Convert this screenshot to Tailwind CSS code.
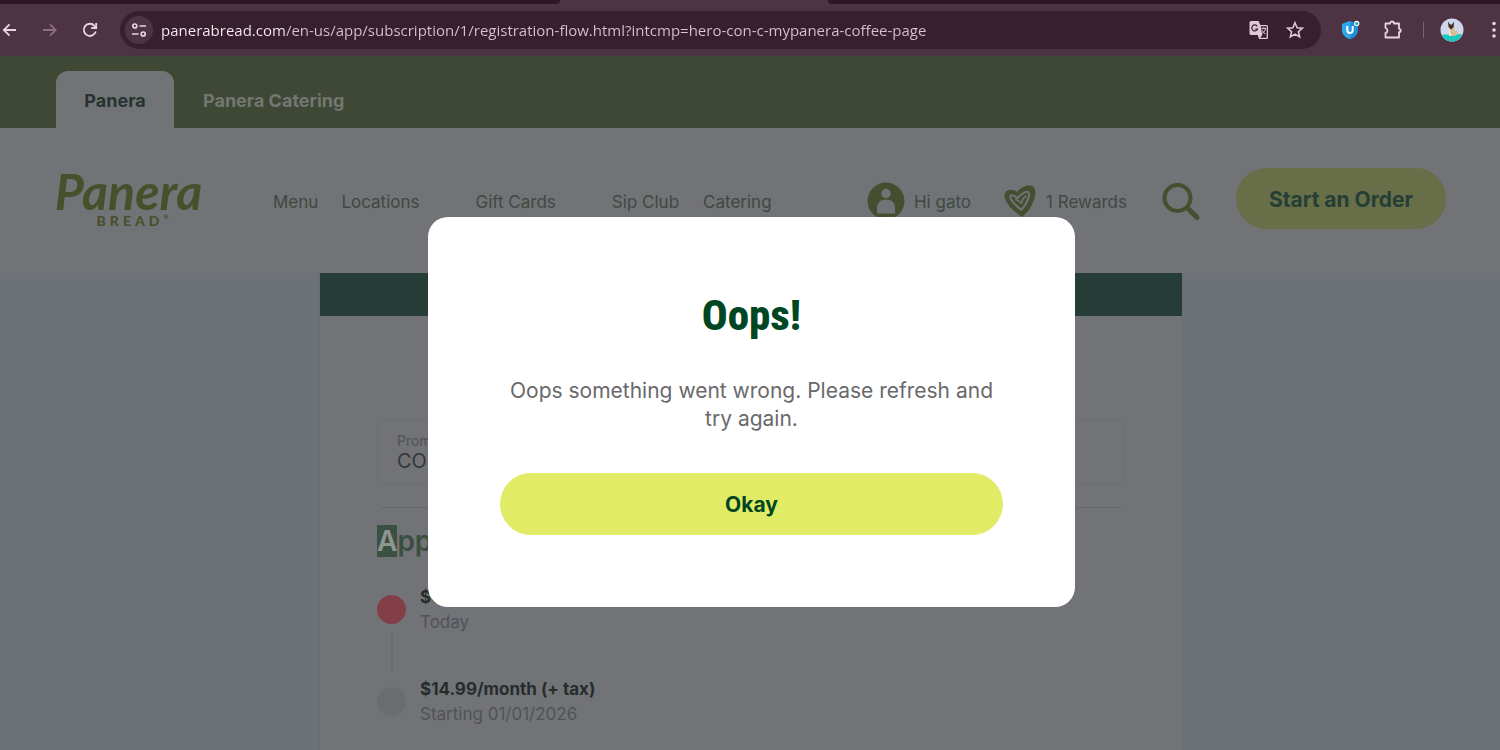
<!DOCTYPE html>
<html lang="en">
<head>
  <meta charset="UTF-8" />
  <meta name="viewport" content="width=device-width, initial-scale=1.0" />
  <title>Panera Bread</title>
  <script src="https://cdn.jsdelivr.net/npm/@tailwindcss/browser@4"></script>
</head>
<body class="h-screen flex flex-col overflow-hidden bg-[#6d7276] font-['Inter',sans-serif]">

  <!-- Browser bar -->
  <div class="flex h-1 shrink-0 bg-[#4e3443]">
    <div class="w-[560px] rounded-br bg-[#2e1726]"></div>
    <div class="w-[268px]"></div>
    <div class="flex-1 rounded-bl bg-[#2e1726]"></div>
  </div>
  <div class="flex h-[52px] shrink-0 items-center bg-[#4e3443] text-[#ecd3e2]">
    <button aria-label="Back" class="w-5 shrink-0">
      <svg class="w-5 h-5" viewBox="0 0 20 20" fill="none" stroke="currentColor" stroke-width="1.8"><path d="M16 10H4M9.500 4.300L3.800 10l5.700 5.700" /></svg>
    </button>
    <button aria-label="Forward" class="ml-5 w-5 shrink-0 text-[#8b6f80]">
      <svg class="w-5 h-5" viewBox="0 0 20 20" fill="none" stroke="currentColor" stroke-width="1.8"><path d="M3 10h12M10 4.300l5.700 5.700-5.700 5.700" /></svg>
    </button>
    <button aria-label="Reload" class="ml-5 w-5 shrink-0">
      <svg class="w-5 h-5" viewBox="0 0 20 20" fill="none" stroke="currentColor" stroke-width="1.8"><path d="M15.800 11.500A6.100 6.100 0 1 1 14.500 5.800L16 7.400" /><path d="M16.200 3v5h-5" /></svg>
    </button>
    <div class="ml-5 flex h-[38px] flex-1 items-center rounded-full bg-[#371f2e] pl-[5px] pr-4">
      <button aria-label="Site information" class="flex h-7 w-7 shrink-0 items-center justify-center rounded-full bg-[#4e3443]">
        <svg class="w-4 h-4" viewBox="0 0 16 16" fill="none" stroke="currentColor" stroke-width="1.7"><circle cx="3.8" cy="4" r="2" /><path d="M8.500 4H15M1 12h6.500" /><circle cx="12.2" cy="12" r="2" /></svg>
      </button>
      <input aria-label="Address" type="text" value="panerabread.com/en-us/app/subscription/1/registration-flow.html?intcmp=hero-con-c-mypanera-coffee-page" class="ml-2 min-w-0 flex-1 bg-[linear-gradient(to_right,#fdeef8_124px,#d8c3d0_124px)] bg-clip-text text-[15px] text-transparent outline-none font-['Open_Sans',sans-serif]" />
      <button aria-label="Translate" class="w-5">
        <svg class="w-5 h-5" viewBox="0 0 20 20"><path d="M2 1h7.500l1.800 4H17.500a1.500 1.500 0 0 1 1.500 1.500V17.500a1.500 1.500 0 0 1-1.500 1.500H10L8.800 15H2A1.500 1.500 0 0 1 .5 13.500v-11A1.500 1.500 0 0 1 2 1z" fill="#e0c8d6" /><path d="M11.700 6.200h6v11.500h-6.500l2-2.700z" fill="#371f2e" /><path d="M8.300 6.300A3 3 0 1 0 8.600 9H6" fill="none" stroke="#371f2e" stroke-width="1.2" /><path d="M12.300 8.500h5M14.800 7.300v1.200M16.500 8.700c-.6 2.400-2 4-3.500 5M13 10.200c.8 1.600 2.200 3 3.600 3.900" fill="none" stroke="#e0c8d6" /></svg>
      </button>
      <button aria-label="Bookmark this page" class="ml-4 w-5">
        <svg class="w-5 h-5" viewBox="0 0 20 20" fill="none" stroke="#e0c8d6" stroke-width="1.6"><path d="M10 2.800l2.100 4.900 5.300.5-4 3.500 1.200 5.200L10 14.100l-4.600 2.800 1.200-5.200-4-3.500 5.300-.5z" /></svg>
      </button>
    </div>
    <button aria-label="Shield extension" class="ml-5 w-5">
      <svg class="w-5 h-5" viewBox="0 0 20 20"><path d="M9 1l8 3v6c0 4.500-3.500 7.700-8 9.300C4.500 17.700 1 14.500 1 10V4z" fill="#1d8fdc" /><path d="M9 1L1 4v6c0 4.500 3.500 7.700 8 9.300z" fill="#2da6ea" /><path d="M6.300 6v4.200a2.700 2.700 0 0 0 5.400 0V6" fill="none" stroke="#fff" stroke-width="2" /><circle cx="15.7" cy="3.5" r="2.7" fill="#fff" /><circle cx="15.7" cy="3.5" r="1.6" fill="#19b5a5" /></svg>
    </button>
    <button aria-label="Extensions" class="ml-[22px] w-5">
      <svg class="w-5 h-5" viewBox="0 0 20 20" fill="none" stroke="currentColor" stroke-width="1.8" stroke-linejoin="round"><path d="M2.500 3.500H7a2 2 0 0 1 4 0h5v5.300a1.700 1.700 0 0 1 0 3.400v5.300H2.500v-4.300a2.700 2.700 0 0 0 0-5.200z" /></svg>
    </button>
    <div class="ml-5 h-4 w-px bg-[#7a6070]"></div>
    <button aria-label="Profile" class="ml-4 w-6">
      <svg class="w-6 h-6" viewBox="0 0 24 24"><circle cx="12" cy="12" r="11.5" fill="#d0d6ec" /><path d="M1.800 17.500C5 15.500 8 17 12 17s7-2 10.200 0A11.500 11.500 0 0 1 1.800 17.500z" fill="#18c8bc" /><path d="M10 8l4 .5 1 5c2-1.500 2.800-1 2.700 1.500-.3 2-2 3-4.200 3H9.500z" fill="#d6bd91" /><path d="M8 3.500l2 3h2l2-3-.3 5.500-2.700 2.500L8.500 9z" fill="#3c3028" /><path d="M9.800 10.500l1.500 7.500H9z" fill="#f5edda" /></svg>
    </button>
    <button aria-label="Menu" class="ml-4 w-5">
      <svg class="w-5 h-5" viewBox="0 0 20 20" fill="currentColor"><circle cx="14" cy="3.5" r="1.8" /><circle cx="14" cy="10" r="1.8" /><circle cx="14" cy="16" r="1.8" /></svg>
    </button>
  </div>

  <div class="relative flex flex-1 flex-col overflow-hidden">
    <!-- Brand tabs -->
    <div class="flex h-[72px] shrink-0 items-end bg-[#3f4834] px-14 text-lg font-bold">
      <a href="#" class="flex h-[57px] w-[118px] items-center justify-center rounded-t-xl bg-[#727377] pt-0.5 text-[#26332f]">Panera</a>
      <a href="#" class="ml-[29px] flex h-[57px] items-center pt-0.5 text-[#727773]">Panera Catering</a>
    </div>

    <!-- Site header -->
    <header class="flex h-[145px] shrink-0 items-center bg-[#727377] pl-14 pr-[54px] text-[17px] text-[#3f4941]">
      <a href="#" class="flex w-[145px] flex-col items-center text-[#46502b] font-['Lato',sans-serif]">
        <span class="text-[50px] leading-10 font-bold italic">Panera</span>
        <span class="flex pl-2 text-sm leading-5 font-black tracking-[4px]">BREAD<span class="text-[6px] leading-3 tracking-normal">®</span></span>
      </a>
      <nav class="ml-[72px] flex items-center pt-1">
        <a href="#" class="mr-[23px]">Menu</a>
        <a href="#" class="mr-14">Locations</a>
        <a href="#" class="mr-14">Gift Cards</a>
        <a href="#" class="mr-6">Sip Club</a>
        <a href="#">Catering</a>
      </nav>
      <div class="ml-auto flex items-center">
        <a href="#" class="flex items-center gap-[9px]">
          <svg class="w-[38px] h-[38px]" viewBox="0 0 38 38"><circle cx="19" cy="19" r="18.5" fill="#434f2f" /><circle cx="19" cy="11.5" r="4.7" fill="#727377" /><path d="M10 31.500V26c0-5 3.500-8.500 9-8.500s9 3.500 9 8.500v5.500z" fill="#727377" /></svg>
          <span class="pt-1">Hi gato</span>
        </a>
        <a href="#" class="ml-8 flex items-center gap-[9px]">
          <svg class="w-[34px] h-[34px]" viewBox="0 0 34 34"><path d="M19 33C14 29 4 23 1.500 13 .5 6 8 3.500 14 8 18 3.500 24 .5 29 2c5 2 3.500 11 1 16.500-2 5-6 10.500-11 14.500z" fill="#434f2f" /><path d="M18.300 25.800C14 22.500 8.500 18 7.300 13.500c-.5-3.200 3.700-3 6.700.8 3.500-3.500 8-7.500 11-6.500 3.500 1.500-2.200 14-6.700 18z" fill="none" stroke="#727377" stroke-width="2" /><path d="M12 15.500c2 .5 4.500 1.200 6.200 3.500 1-3.500 3-6 5-7.500" fill="none" stroke="#727377" stroke-width="1.6" /></svg>
          <span class="pt-1">1 Rewards</span>
        </a>
        <button aria-label="Search" class="ml-[35px]">
          <svg class="w-[38px] h-[38px]" viewBox="0 0 38 38" fill="none" stroke="#434f2f" stroke-linecap="round"><circle cx="15.5" cy="16" r="13" stroke-width="4" /><path d="M25.500 26L35 35.500" stroke-width="5" /></svg>
        </button>
        <button class="mb-1 ml-9 h-[61px] w-[210px] rounded-full bg-[#686f48] pt-0.5 text-[21px] font-bold text-[#253e36]">Start an Order</button>
      </div>
    </header>

    <!-- Checkout -->
    <div class="flex flex-1 justify-center pl-0.5">
      <main class="flex w-[864px] flex-col border-x border-[#6a6c71] bg-[#727377]">
        <div class="h-[43px] shrink-0 bg-[#263c37]"></div>
        <div class="flex-1 px-[57px] pt-[104px]">
          <div class="flex h-16 flex-col justify-center rounded-lg border border-[#6c6d72] px-[19px] pt-0.5">
            <label for="promo" class="text-sm leading-4 text-[#505155]">Promo Code</label>
            <input id="promo" type="text" value="COFFEE" class="w-full text-xl leading-6 text-[#35373a] outline-none" />
          </div>
          <hr class="mx-1 mt-[23px] border-[#66686c]" />
          <h2 class="mt-[17px] text-[28px] leading-8 font-semibold text-[#39503f]"><span class="inline-block bg-[#3a5041] text-[#8f9692]">A</span>pplied</h2>
          <ol class="mt-7 text-[17px] leading-[25px]">
            <li class="flex gap-[14px]">
              <div class="flex w-[29px] flex-col items-center pt-[10px]">
                <span class="h-[29px] w-[29px] rounded-full bg-[#833f47]"></span>
                <span class="mt-[10px] mb-[7px] h-9 w-0.5 bg-[#6a6b6f]"></span>
              </div>
              <div>
                <p class="font-bold text-[#252d2b]">$0.00</p>
                <p class="text-[#505257]">Today</p>
              </div>
            </li>
            <li class="flex gap-[14px]">
              <div class="w-[29px] pt-[10px]">
                <span class="block h-[29px] w-[29px] rounded-full bg-[#6b6c70]"></span>
              </div>
              <div>
                <p class="font-bold text-[#252d2b]">$14.99/month (+ tax)</p>
                <p class="text-[#505257]">Starting 01/01/2026</p>
              </div>
            </li>
          </ol>
        </div>
      </main>
    </div>

    <!-- Error dialog -->
    <div class="absolute inset-0 flex items-start justify-center pt-[161px] pl-[3px]">
      <div role="dialog" aria-labelledby="dialog-title" class="w-[647px] rounded-[20px] bg-white px-18 pt-[70px] pb-18 text-center">
        <h1 id="dialog-title" class="text-[43px] leading-14 font-extrabold text-[#004622] font-['Roboto_Condensed',sans-serif]">Oops!</h1>
        <p class="mt-[34px] text-[21px] leading-7 text-[#69696b]">Oops something went wrong. Please refresh and try again.</p>
        <button class="mt-10 h-[62px] w-full rounded-full bg-[#e1eb66] pt-0.5 text-[21px] font-bold text-[#004622]">Okay</button>
      </div>
    </div>
  </div>
</body>
</html>
